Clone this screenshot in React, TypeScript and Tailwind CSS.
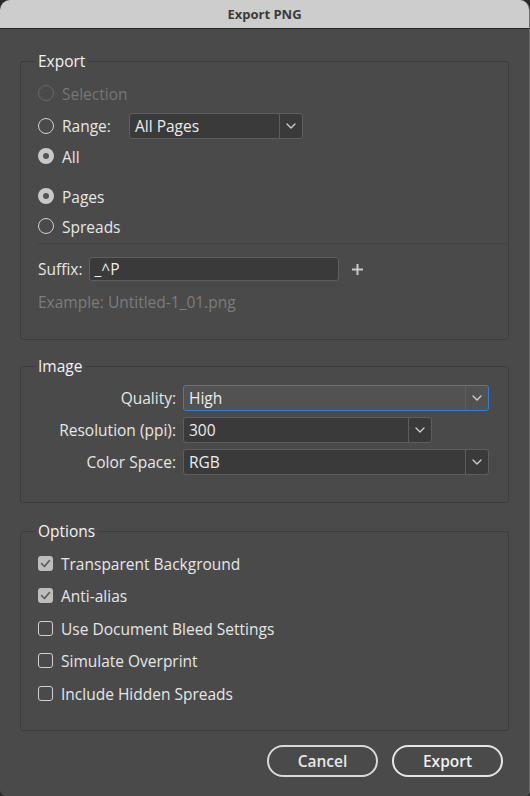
import React from "react";

const font = { fontFamily: '"Open Sans", "Noto Sans", Arial, sans-serif' };

function Chevron() {
  return (
    <svg width="10" height="6" viewBox="0 0 10 6" fill="none">
      <path d="M1 1l4 4 4-4" stroke="#d0d0d0" strokeWidth="1.3" strokeLinecap="round" strokeLinejoin="round" />
    </svg>
  );
}

function Radio({ checked, disabled, label }: { checked?: boolean; disabled?: boolean; label: string }) {
  return (
    <div className="flex h-[24px] items-center">
      {checked ? (
        <span className="flex h-[16px] w-[16px] items-center justify-center rounded-full bg-[#c9c9c9]">
          <span className="h-[6px] w-[6px] rounded-full bg-[#555]" />
        </span>
      ) : (
        <span
          className={
            disabled
              ? "h-[16px] w-[16px] rounded-full border-[1.5px] border-[#686868]"
              : "h-[16px] w-[16px] rounded-full border-[1.5px] border-[#cfcfcf]"
          }
        />
      )}
      <span className={disabled ? "ml-[8px] pt-px text-[#767676]" : "ml-[8px] pt-px text-[#e6e6e6]"}>{label}</span>
    </div>
  );
}

function Check({ checked, label }: { checked?: boolean; label: string }) {
  return (
    <div className="flex h-[24px] items-center">
      {checked ? (
        <span className="flex h-[15px] w-[15px] items-center justify-center rounded-[3px] bg-[#bdbdbd]">
          <svg width="11" height="9" viewBox="0 0 11 9" fill="none">
            <path d="M1.5 4.5l3 3 5-6" stroke="#5a5a5a" strokeWidth="1.6" strokeLinecap="round" strokeLinejoin="round" />
          </svg>
        </span>
      ) : (
        <span className="h-[15px] w-[15px] rounded-[3px] border border-[#cfcfcf]" />
      )}
      <span className="ml-[8px] pt-px text-[#e6e6e6]">{label}</span>
    </div>
  );
}

function Select({ value, width, focused }: { value: string; width: string; focused?: boolean }) {
  return (
    <div
      className={
        focused
          ? `flex h-[26px] ${width} items-stretch rounded-[3px] border border-[#2e80d6] bg-[#525252]`
          : `flex h-[26px] ${width} items-stretch rounded-[3px] border border-[#5e5e5e] bg-[#3a3a3a]`
      }
    >
      <span className="flex flex-1 items-center pl-[5px] text-[#ececec]">{value}</span>
      <span className="flex w-[23px] items-center justify-center border-l border-[#5e5e5e]">
        <Chevron />
      </span>
    </div>
  );
}

function Group({ title, children, className }: { title: string; children: React.ReactNode; className: string }) {
  return (
    <fieldset className={`mx-[20px] rounded-[3px] border border-[#3d3d3d] px-[17px] ${className}`}>
      <legend className="-ml-[3px] px-[3px] leading-[20px] text-[#f2f2f2]">{title}</legend>
      {children}
    </fieldset>
  );
}

export default function App() {
  return (
    <div className="min-h-screen bg-[#2a2a2a]" style={font}>
      <div className="h-[796px] w-[530px] overflow-hidden rounded-t-[10px] rounded-b-[6px] border-r border-[#6b6b6b] bg-[#4a4a4a] text-[15.5px] font-medium leading-[20px]">
        <div className="flex h-[29px] items-center justify-center border-b border-[#222] bg-[#cdcdcd] text-[13px] font-bold text-[#3b3b3b]">
          Export PNG
        </div>

        <Group title="Export" className="mt-[22px] pb-[27px]">
          <div className="mt-[10px]">
            <Radio disabled label="Selection" />
          </div>
          <div className="mt-[8px] flex items-center">
            <div className="w-[91px]">
              <Radio label="Range:" />
            </div>
            <div className="h-[25px]">
              <Select value="All Pages" width="w-[174px]" />
            </div>
          </div>
          <div className="mt-[6px]">
            <Radio checked label="All" />
          </div>
          <div className="mt-[16px]">
            <Radio checked label="Pages" />
          </div>
          <div className="mt-[6px]">
            <Radio label="Spreads" />
          </div>
          <div className="-mr-[17px] mt-[5px] h-px bg-[#424242]" />
          <div className="mt-[13px] flex items-center">
            <span className="text-[#e6e6e6]">Suffix:</span>
            <div className="ml-[6px] flex h-[24px] w-[250px] items-center rounded-[3px] border border-[#5e5e5e] bg-[#3a3a3a] pl-[5px] text-[#ececec]">
              _^P
            </div>
            <svg className="ml-[12px]" width="13" height="13" viewBox="0 0 13 13">
              <path d="M6.5 1v11M1 6.5h11" stroke="#c9c9c9" strokeWidth="2" />
            </svg>
          </div>
          <div className="mt-[11px] text-[#7c7c7c]">Example: Untitled-1_01.png</div>
        </Group>

        <Group title="Image" className="mt-[16px] pb-[27px]">
          <div className="mt-[9px] flex items-center">
            <span className="w-[138px] text-right text-[#e6e6e6]">Quality:</span>
            <div className="ml-[7px]">
              <Select value="High" width="w-[306px]" focused />
            </div>
          </div>
          <div className="mt-[6px] flex items-center">
            <span className="w-[138px] text-right text-[#e6e6e6]">Resolution (ppi):</span>
            <div className="ml-[7px]">
              <Select value="300" width="w-[249px]" />
            </div>
          </div>
          <div className="mt-[6px] flex items-center">
            <span className="w-[138px] text-right text-[#e6e6e6]">Color Space:</span>
            <div className="ml-[7px]">
              <Select value="RGB" width="w-[306px]" />
            </div>
          </div>
        </Group>

        <Group title="Options" className="mt-[18px] pb-[25px]">
          <div className="mt-[10px] flex flex-col gap-[8.5px]">
            <Check checked label="Transparent Background" />
            <Check checked label="Anti-alias" />
            <Check label="Use Document Bleed Settings" />
            <Check label="Simulate Overprint" />
            <Check label="Include Hidden Spreads" />
          </div>
        </Group>

        <div className="mt-[14px] flex justify-end gap-[14px] pr-[26px]">
          <button className="h-[32px] w-[111px] rounded-full border-2 border-[#d8d8d8] text-[15.5px] font-semibold text-[#e8e8e8]">
            Cancel
          </button>
          <button className="h-[32px] w-[111px] rounded-full border-2 border-[#e6e6e6] text-[15.5px] font-semibold text-[#efefef]">
            Export
          </button>
        </div>
      </div>
    </div>
  );
}
